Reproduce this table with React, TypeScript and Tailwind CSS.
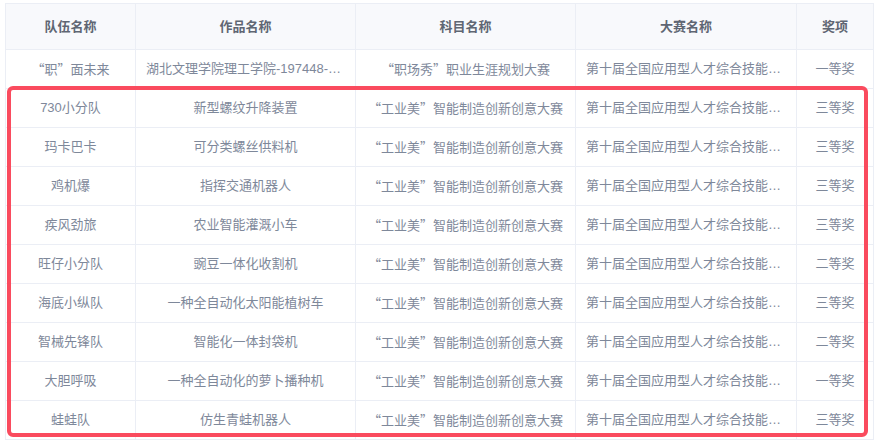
import React from "react";

const comp = "第十届全国应用型人才综合技能大赛";
const gym = "“工业美”智能制造创新创意大赛";

const rows: [string, string, string, string, string][] = [
  ["“职”面未来", "湖北文理学院理工学院-197448-职面未来", "“职场秀”职业生涯规划大赛", comp, "一等奖"],
  ["730小分队", "新型螺纹升降装置", gym, comp, "三等奖"],
  ["玛卡巴卡", "可分类螺丝供料机", gym, comp, "三等奖"],
  ["鸡机爆", "指挥交通机器人", gym, comp, "三等奖"],
  ["疾风劲旅", "农业智能灌溉小车", gym, comp, "三等奖"],
  ["旺仔小分队", "豌豆一体化收割机", gym, comp, "二等奖"],
  ["海底小纵队", "一种全自动化太阳能植树车", gym, comp, "三等奖"],
  ["智械先锋队", "智能化一体封袋机", gym, comp, "二等奖"],
  ["大胆呼吸", "一种全自动化的萝卜播种机", gym, comp, "一等奖"],
  ["蛙蛙队", "仿生青蛙机器人", gym, comp, "三等奖"],
];

const headers = ["队伍名称", "作品名称", "科目名称", "大赛名称", "奖项"];

function Txt({ s }: { s: string }) {
  const parts = s.split(/([“”])/);
  return (
    <>
      {parts.map((p, i) =>
        p === "“" || p === "”" ? (
          <span key={i} style={{ fontFamily: '"Noto Sans CJK SC", sans-serif' }}>
            {p}
          </span>
        ) : (
          <React.Fragment key={i}>{p}</React.Fragment>
        )
      )}
    </>
  );
}

export default function App() {
  return (
    <div
      className="relative w-[876px] h-[442px] bg-white overflow-hidden pt-[3px] pl-[5px]"
      style={{ fontFamily: '"Liberation Sans", "Noto Sans CJK SC", sans-serif' }}
    >
      <table className="table-fixed border-collapse w-[868px] text-[13px]">
        <colgroup>
          <col className="w-[130px]" />
          <col className="w-[220px]" />
          <col className="w-[220px]" />
          <col className="w-[221px]" />
          <col className="w-[77px]" />
        </colgroup>
        <thead>
          <tr className="h-[46px] bg-[#f8f9fc]">
            {headers.map((h) => (
              <th
                key={h}
                className="border border-[#ebeef5] px-[10px] font-bold text-[#5f6673] text-center"
              >
                {h}
              </th>
            ))}
          </tr>
        </thead>
        <tbody>
          {rows.map((r, i) => (
            <tr key={i} className="h-[39px]">
              {r.map((c, j) => (
                <td
                  key={j}
                  className="border border-[#ebeef5] px-[10px] text-[#7e889a] text-center whitespace-nowrap overflow-hidden text-ellipsis"
                >
                  <Txt s={c} />
                </td>
              ))}
            </tr>
          ))}
        </tbody>
      </table>
      <div className="absolute left-[7px] top-[86px] w-[861px] h-[351px] border-[4px] border-[#fa4b5e] rounded-[6px] pointer-events-none" />
    </div>
  );
}
